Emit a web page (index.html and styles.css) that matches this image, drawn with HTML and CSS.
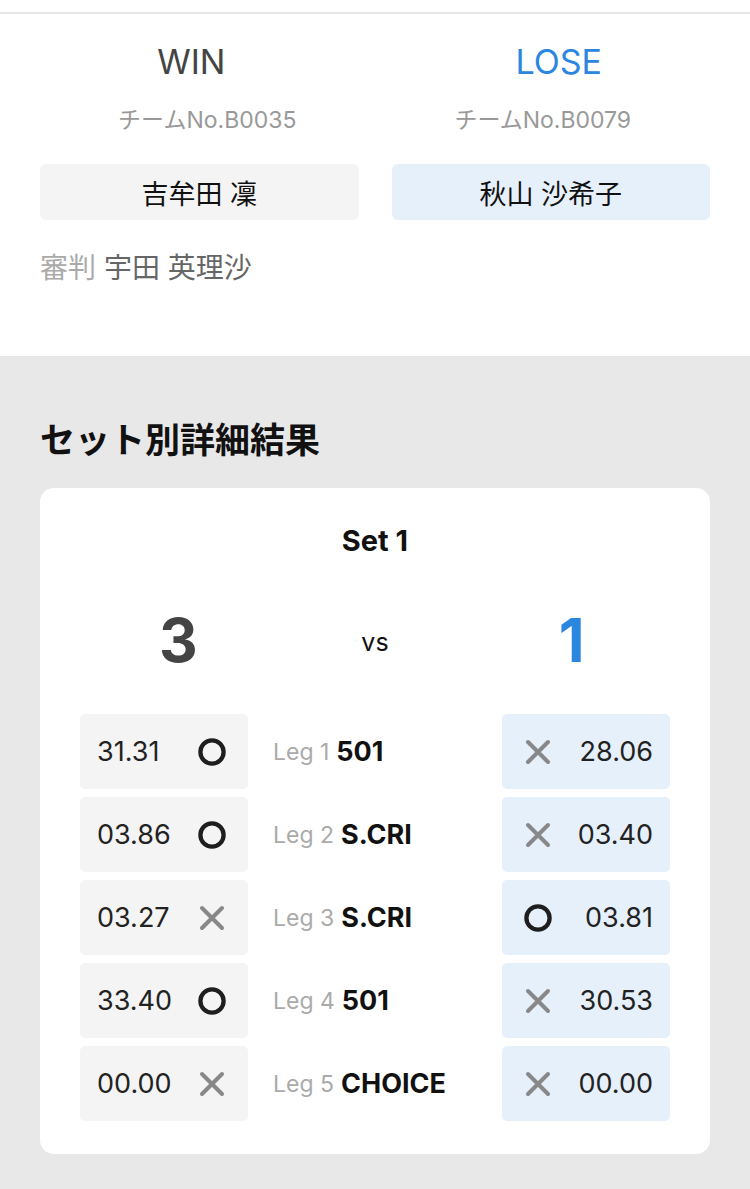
FILE: index.html
```html
<!DOCTYPE html>
<html lang="ja">
<head>
  <meta charset="UTF-8" />
  <meta name="viewport" content="width=device-width, initial-scale=1.0"/>
  <title>試合結果</title>
  <link rel="stylesheet" href="styles.css">
</head>
<body>

  <div class="topbar"></div>

  <section class="match">
    <div class="teams">
      <div class="team">
        <div class="result">WIN</div>
        <div class="team-no">チームNo.B0035</div>
        <div class="player">吉牟田 凜</div>
      </div>
      <div class="team lose">
        <div class="result">LOSE</div>
        <div class="team-no">チームNo.B0079</div>
        <div class="player">秋山 沙希子</div>
      </div>
    </div>
    <p class="referee"><span class="label">審判</span> 宇田 英理沙</p>
  </section>

  <section class="details">
    <h2>セット別詳細結果</h2>

    <div class="set-card">
      <div class="set-title">Set 1</div>
      <div class="set-score">
        <span class="score">3</span>
        <span class="vs">vs</span>
        <span class="score lose">1</span>
      </div>

      <div class="legs" id="legs"></div>
    </div>
  </section>

  <script>
    const legs = [
      { no: 1, game: '501',    left: '31.31', right: '28.06', win: 'left' },
      { no: 2, game: 'S.CRI',  left: '03.86', right: '03.40', win: 'left' },
      { no: 3, game: 'S.CRI',  left: '03.27', right: '03.81', win: 'right' },
      { no: 4, game: '501',    left: '33.40', right: '30.53', win: 'left' },
      { no: 5, game: 'CHOICE', left: '00.00', right: '00.00', win: 'none' }
    ];

    const circle = '<svg class="mark" viewBox="0 0 28 28"><circle cx="14" cy="14" r="11.6" fill="none" stroke="#1e1e1e" stroke-width="4.3"/></svg>';
    const cross = '<svg class="mark" viewBox="0 0 28 28"><path d="M4 4 L24 24 M24 4 L4 24" stroke="#888" stroke-width="4" stroke-linecap="round"/></svg>';

    const container = document.getElementById('legs');

    legs.forEach(function (leg) {
      const leftMark = leg.win === 'left' ? circle : cross;
      const rightMark = leg.win === 'right' ? circle : cross;

      const row = document.createElement('div');
      row.className = 'leg';
      row.innerHTML =
        '<div class="cell left"><span class="stat">' + leg.left + '</span>' + leftMark + '</div>' +
        '<div class="leg-name"><span class="leg-no">Leg ' + leg.no + '</span> <b>' + leg.game + '</b></div>' +
        '<div class="cell right">' + rightMark + '<span class="stat">' + leg.right + '</span></div>';
      container.appendChild(row);
    });
  </script>
</body>
</html>
```

FILE: styles.css
```css
body {
  margin: 0;
  font-family: Inter, 'Noto Sans CJK JP', sans-serif;
  background: #e8e8e8;
  color: #111;
}

.topbar {
  height: 12px;
  background: #fff;
  border-bottom: 2px solid #e6e6e6;
}

.match {
  background: #fff;
  padding: 26px 40px 70px;
}

.teams {
  display: grid;
  grid-template-columns: 1fr 1fr;
  gap: 33px;
}

.team {
  display: flex;
  flex-direction: column;
  align-items: center;
}

.result {
  font-size: 34px;
  line-height: 44px;
  color: #444;
  padding-right: 16px;
}

.team.lose .result {
  color: #2b86e0;
  padding-right: 0;
  padding-left: 16px;
}

.team-no {
  margin-top: 21px;
  font-size: 23px;
  line-height: 30px;
  color: #999;
  padding-left: 16px;
}

.team.lose .team-no {
  padding-left: 0;
  padding-right: 16px;
}

.player {
  margin-top: 29px;
  align-self: stretch;
  height: 56px;
  display: flex;
  align-items: center;
  justify-content: center;
  background: #f4f4f4;
  border-radius: 6px;
  font-size: 27px;
  color: #111;
}

.team.lose .player {
  background: #e6f0fb;
}

.referee {
  margin: 30px 0 0;
  font-size: 28px;
  line-height: 36px;
  color: #666;
}

.referee .label {
  color: #aaa;
}

.details {
  padding: 62px 40px 36px;
}

.details h2 {
  margin: 0 0 26px;
  font-size: 35px;
  line-height: 44px;
  font-weight: bold;
  color: #111;
}

.set-card {
  background: #fff;
  border-radius: 14px;
  padding: 35px 40px 33px;
}

.set-title {
  text-align: center;
  font-size: 29px;
  line-height: 36px;
  font-weight: bold;
}

.set-score {
  display: grid;
  grid-template-columns: 1fr 1fr 1fr;
  align-items: center;
  margin: 41px 0 34px;
  height: 80px;
}

.score {
  font-size: 60px;
  font-weight: bold;
  color: #444;
  text-align: center;
}

.score.lose {
  color: #2b86e0;
}

.vs {
  text-align: center;
  font-size: 25px;
  color: #111;
  padding-top: 4px;
}

.legs {
  display: flex;
  flex-direction: column;
  gap: 8px;
}

.leg {
  display: grid;
  grid-template-columns: 168px 1fr 168px;
  column-gap: 25px;
  height: 75px;
}

.cell {
  display: flex;
  align-items: center;
  justify-content: space-between;
  background: #f4f4f4;
  border-radius: 5px;
  padding: 0 22px 0 17px;
}

.cell.right {
  background: #e6f0fb;
  padding: 0 17px 0 22px;
}

.stat {
  font-size: 27px;
  color: #222;
}

.mark {
  width: 28px;
  height: 28px;
}

.leg-name {
  display: flex;
  align-items: center;
  gap: 7px;
  font-size: 27px;
  color: #111;
}

.leg-no {
  font-size: 23px;
  color: #aaa;
}
```
